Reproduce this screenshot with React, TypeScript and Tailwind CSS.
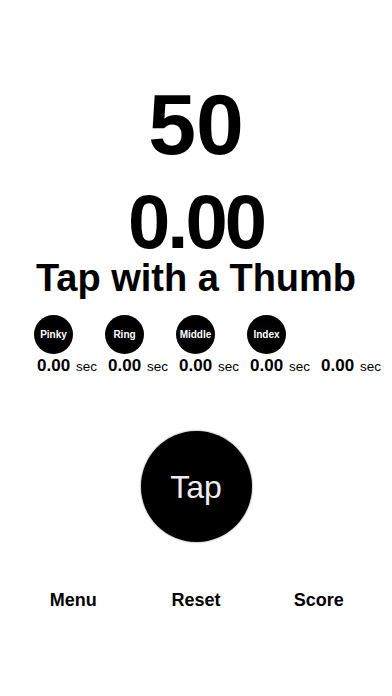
import React from "react";

const fingers = ["Pinky", "Ring", "Middle", "Index", ""];

export default function App() {
  return (
    <div
      className="w-full h-[696px] bg-white text-black flex flex-col overflow-hidden"
      style={{ fontFamily: '"Liberation Sans", Arial, Helvetica, sans-serif' }}
    >
      <div className="mt-[81px] text-center font-bold text-[86px] leading-none">50</div>
      <div className="mt-[17px] text-center font-bold text-[76px] leading-none tracking-[-3px]">0.00</div>
      <div className="mt-[-1px] text-center font-bold text-[38px] leading-none">Tap with a Thumb</div>

      <div className="mt-[18px] pl-[34px] grid grid-cols-[repeat(5,71px)]">
        {fingers.map((f, i) => (
          <div key={i} className="flex flex-col items-start">
            {f ? (
              <div className="w-[39px] h-[39px] rounded-full bg-black flex items-center justify-center">
                <span className="text-white font-bold text-[10px] leading-none">{f}</span>
              </div>
            ) : (
              <div className="w-[39px] h-[39px]" />
            )}
            <div className="mt-[3px] pl-[3px] flex items-baseline gap-[6px]">
              <span className="font-bold text-[17px] leading-none">0.00</span>
              <span className="text-[13.5px] leading-none">sec</span>
            </div>
          </div>
        ))}
      </div>

      <div className="mt-[57px] flex justify-center">
        <div className="w-[111px] h-[111px] rounded-full bg-black flex items-center justify-center shadow-[0_0_2px_rgba(0,0,0,0.6)]">
          <span className="text-[#ececec] text-[32px] leading-none">Tap</span>
        </div>
      </div>

      <div className="mt-[49px] px-[12px] grid grid-cols-3 text-center font-bold text-[18px] leading-none">
        <div>Menu</div>
        <div>Reset</div>
        <div>Score</div>
      </div>
    </div>
  );
}
